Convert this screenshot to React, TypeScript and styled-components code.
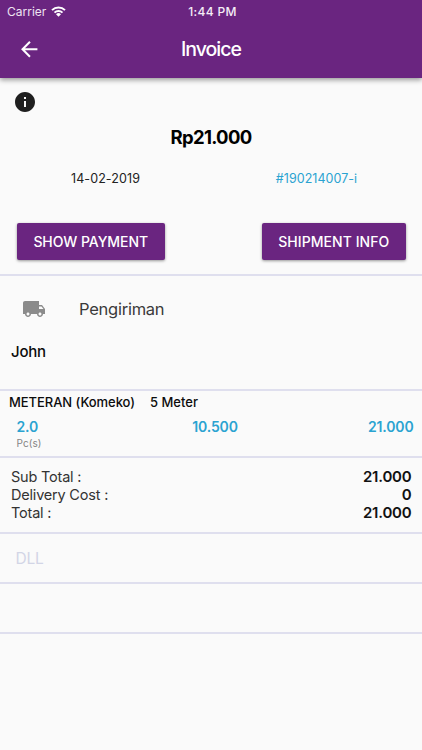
import React from "react";
import styled, { createGlobalStyle } from "styled-components";

const purple = "#6a2580";
const blue = "#2aa3d1";

const GlobalStyle = createGlobalStyle`
  * { box-sizing: border-box; }
  body { margin: 0; background: #fafafa; font-family: Inter, "Liberation Sans", sans-serif; color: #0c0c0c; }
`;

const Screen = styled.div`
  width: 422px;
  height: 750px;
  overflow: hidden;
  background: #fafafa;
`;

const Header = styled.header`
  height: 77.5px;
  background: ${purple};
  color: #fff;
  box-shadow: 0 2px 5px rgba(0, 0, 0, 0.4);
`;

const StatusBar = styled.div`
  height: 22px;
  display: grid;
  grid-template-columns: 1fr auto 1fr;
  align-items: center;
  padding: 0 4px 0 7px;
`;

const CarrierInfo = styled.div`
  display: flex;
  align-items: center;
  gap: 5px;
`;

const AppBar = styled.div`
  height: 54px;
  display: grid;
  grid-template-columns: 58px 1fr 58px;
  align-items: center;
  justify-items: center;
`;

const Text = styled.span<{
  $size: number;
  $weight?: number;
  $spacing?: number;
  $color?: string;
}>`
  display: block;
  white-space: nowrap;
  font-size: ${(p) => p.$size}px;
  font-weight: ${(p) => p.$weight ?? 400};
  letter-spacing: ${(p) => p.$spacing ?? 0}px;
  color: ${(p) => p.$color ?? "inherit"};
`;

const Section = styled.section<{ $height: number }>`
  height: ${(p) => p.$height}px;
  border-bottom: 2px solid #dfdfee;
`;

const InfoRow = styled.div`
  height: 48.5px;
  padding: 12.5px 0 0 12.5px;
`;

const Amount = styled.div`
  height: 22px;
  display: flex;
  align-items: center;
  justify-content: center;
`;

const Meta = styled.div`
  height: 60px;
  display: grid;
  grid-template-columns: 1fr 1fr;
  align-items: center;
  justify-items: center;
`;

const Actions = styled.div`
  display: flex;
  justify-content: space-between;
  padding: 15px 16.5px 0;
`;

const Button = styled.button<{ $width: number }>`
  width: ${(p) => p.$width}px;
  height: 37px;
  border: 0;
  border-radius: 2px;
  padding: 0;
  display: flex;
  align-items: center;
  justify-content: center;
  background: ${purple};
  color: #fff;
  font-family: inherit;
  box-shadow: 0 1px 3px rgba(0, 0, 0, 0.4);
`;

const Shipping = styled.div`
  height: 66px;
  display: flex;
  align-items: center;
  padding-left: 22px;
  gap: 33px;
`;

const Recipient = styled.div`
  padding: 0 11px;
`;

const ItemTitle = styled.div`
  height: 23px;
  padding-left: 9px;
  display: flex;
  align-items: center;
  gap: 15px;
`;

const ItemFigures = styled.div`
  height: 25px;
  padding: 0 8.5px 0 16.5px;
  display: grid;
  grid-template-columns: 1fr auto 1fr;
  align-items: center;
  & > :last-child { justify-self: end; }
`;

const Unit = styled.div`
  padding-left: 16.5px;
  margin-top: -2px;
`;

const Totals = styled.div`
  padding: 9px 10.5px 0 11px;
`;

const TotalRow = styled.div`
  height: 18.3px;
  display: flex;
  align-items: center;
  justify-content: space-between;
`;

const Note = styled.div`
  height: 100%;
  display: flex;
  align-items: center;
  padding-left: 15.5px;
`;

const WifiIcon = () => (
  <svg width="15" height="11" viewBox="0 0 15 11" fill="none" stroke="#fff" strokeWidth="2">
    <path d="M1 4.1 A9.3 9.3 0 0 1 14 4.1" />
    <path d="M3.5 6.6 A5.8 5.8 0 0 1 11.5 6.6" />
    <path d="M7.5 10.7 L5 8.2 A3.6 3.6 0 0 1 10 8.2 Z" fill="#fff" stroke="none" />
  </svg>
);

const MaterialIcon = ({ d, size, color }: { d: string; size: number; color: string }) => (
  <svg width={size} height={size} viewBox="0 0 24 24" fill={color} display="block">
    <path d={d} />
  </svg>
);

const BACK = "M20 11H7.83l5.59-5.59L12 4l-8 8 8 8 1.41-1.41L7.83 13H20v-2z";
const INFO =
  "M12 2C6.48 2 2 6.48 2 12s4.48 10 10 10 10-4.48 10-10S17.52 2 12 2zm1 15h-2v-6h2v6zm0-8h-2V7h2v2z";
const TRUCK =
  "M20 8h-3V4H3c-1.1 0-2 .9-2 2v11h2c0 1.66 1.34 3 3 3s3-1.34 3-3h6c0 1.66 1.34 3 3 3s3-1.34 3-3h2v-5l-3-4zM6 18.5c-.83 0-1.5-.67-1.5-1.5s.67-1.5 1.5-1.5 1.5.67 1.5 1.5-.67 1.5-1.5 1.5zm13.5-9l1.96 2.5H17V9.5h2.5zm-1.5 9c-.83 0-1.5-.67-1.5-1.5s.67-1.5 1.5-1.5 1.5.67 1.5 1.5-.67 1.5-1.5 1.5z";

const totals = [
  ["Sub Total :", "21.000"],
  ["Delivery Cost :", "0"],
  ["Total :", "21.000"],
];

export default function App() {
  return (
    <>
      <GlobalStyle />
      <Screen>
        <Header>
          <StatusBar>
            <CarrierInfo>
              <Text $size={12} $color="#eee3f1">Carrier</Text>
              <WifiIcon />
            </CarrierInfo>
            <Text $size={12} $weight={500} $spacing={0.3} $color="#f5edf7">1:44 PM</Text>
          </StatusBar>
          <AppBar>
            <MaterialIcon d={BACK} size={24.5} color="#fff" />
            <Text $size={19.5} $weight={500} $spacing={-1}>Invoice</Text>
          </AppBar>
        </Header>

        <Section $height={198}>
          <InfoRow>
            <MaterialIcon d={INFO} size={24} color="#1f1f1f" />
          </InfoRow>
          <Amount>
            <Text $size={18.5} $weight={700} $spacing={-0.7} $color="#000">Rp21.000</Text>
          </Amount>
          <Meta>
            <Text $size={12.5} $spacing={0.1} $color="#222">14-02-2019</Text>
            <Text $size={12.5} $spacing={0.05} $color={blue}>#190214007-i</Text>
          </Meta>
          <Actions>
            <Button $width={148.5}>
              <Text $size={14} $weight={500} $spacing={-0.05}>SHOW PAYMENT</Text>
            </Button>
            <Button $width={143.5}>
              <Text $size={14} $weight={500} $spacing={0.05}>SHIPMENT INFO</Text>
            </Button>
          </Actions>
        </Section>

        <Section $height={115}>
          <Shipping>
            <MaterialIcon d={TRUCK} size={24} color="#8b8b8b" />
            <Text $size={16.5} $spacing={-0.25} $color="#3a3a3a">Pengiriman</Text>
          </Shipping>
          <Recipient>
            <Text $size={15} $weight={500} $spacing={-0.2}>John</Text>
          </Recipient>
        </Section>

        <Section $height={67.5}>
          <ItemTitle>
            <Text $size={13} $weight={500} $spacing={-0.05}>METERAN (Komeko)</Text>
            <Text $size={13} $weight={500}>5 Meter</Text>
          </ItemTitle>
          <ItemFigures>
            <Text $size={14} $weight={600} $spacing={-0.15} $color={blue}>2.0</Text>
            <Text $size={14} $weight={600} $spacing={-0.15} $color={blue}>10.500</Text>
            <Text $size={14} $weight={600} $spacing={-0.15} $color={blue}>21.000</Text>
          </ItemFigures>
          <Unit>
            <Text $size={10} $spacing={0.1} $color="#858585">Pc(s)</Text>
          </Unit>
        </Section>

        <Section $height={76}>
          <Totals>
            {totals.map(([label, value]) => (
              <TotalRow key={label}>
                <Text $size={14.5} $spacing={-0.2} $color="#333">{label}</Text>
                <Text $size={15} $weight={600} $spacing={-0.2} $color="#111">{value}</Text>
              </TotalRow>
            ))}
          </Totals>
        </Section>

        <Section $height={50}>
          <Note>
            <Text $size={15.5} $spacing={-0.2} $color="#d2d5e6">DLL</Text>
          </Note>
        </Section>
        <Section $height={50} />
      </Screen>
    </>
  );
}
